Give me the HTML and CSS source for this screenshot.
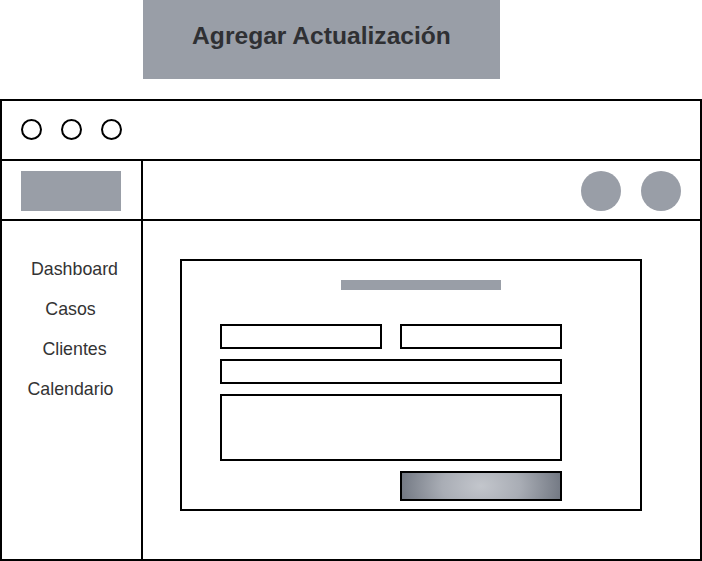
FILE: index.html
```html
<!doctype html>
<html lang="es">
<head>
<meta charset="utf-8">
<title>Agregar Actualización</title>
<meta name="viewport" content="width=device-width, initial-scale=1">
<link rel="stylesheet" href="styles.css">
</head>
<body>
<header class="banner">Agregar Actualización</header>
<div class="window">
<div class="titlebar">
<span class="dot"></span>
<span class="dot"></span>
<span class="dot"></span>
</div>
<div class="layout">
<div class="brand"><div class="logo"></div></div>
<div class="topbar">
<span class="avatar"></span>
<span class="avatar"></span>
</div>
<nav class="sidebar">
<a href="#">Dashboard</a>
<a href="#">Casos</a>
<a href="#">Clientes</a>
<a href="#">Calendario</a>
</nav>
<main class="content">
<form class="card">
<div class="card-title"></div>
<div class="row">
<input type="text" aria-label="Caso">
<input type="text" aria-label="Fecha">
</div>
<input type="text" aria-label="Título">
<textarea aria-label="Descripción"></textarea>
<div class="actions"><button type="button" aria-label="Guardar"></button></div>
</form>
</main>
</div>
</div>
</body>
</html>
```
FILE: styles.css
```css
* { box-sizing:border-box; margin:0; }
body { background:#fff; font-family:'Liberation Sans', Arial, sans-serif; color:#333; width:702px; height:561px; overflow:hidden; }
.banner { margin-left:143px; width:357px; height:79px; background:#999ea7; font-weight:bold; font-size:24.6px; color:#2f3033; display:flex; align-items:center; justify-content:center; padding-bottom:8px; }
.window { margin-top:20px; width:702px; height:462px; border:2px solid #000; display:flex; flex-direction:column; }
.titlebar { height:60px; border-bottom:2px solid #000; display:flex; align-items:center; gap:19px; padding:0 0 1px 19px; }
.dot { width:21px; height:21px; border:2px solid #000; border-radius:50%; }
.layout { flex-grow:1; display:grid; grid-template-columns:141px 1fr; grid-template-rows:60px 1fr; }
.brand { border-right:2px solid #000; border-bottom:2px solid #000; padding:10px 0 0 19px; }
.logo { width:100px; height:40px; background:#999ea7; }
.topbar { border-bottom:2px solid #000; display:flex; justify-content:flex-end; gap:20px; padding:10px 19px 0 0; }
.avatar { width:40px; height:40px; border-radius:50%; background:#999ea7; }
.sidebar { border-right:2px solid #000; display:flex; flex-direction:column; align-items:center; padding-top:28px; }
.sidebar a { color:#333; text-decoration:none; font-size:17.8px; line-height:40px; }
.sidebar a:nth-child(odd) { margin-left:6px; }
.sidebar a:nth-child(even) { margin-right:2px; }
.content { padding:38px 0 0 37px; }
.card { width:462px; height:252px; border:2px solid #000; padding:19px 0 0 38px; display:flex; flex-direction:column; gap:10px; }
.card-title { width:160px; height:10px; background:#999ea7; margin:0 0 24px 121px; }
.row { display:flex; gap:18px; }
input, textarea, button { border:2px solid #000; border-radius:0; font:inherit; }
input { width:342px; height:25px; }
.row input { width:162px; }
textarea { width:342px; height:67px; resize:none; }
.actions { display:flex; justify-content:flex-end; width:342px; }
button { width:162px; height:30px; background:radial-gradient(ellipse 55% 220% at center, #c3c6cc 0%, #a9adb5 45%, #6b717c 100%); }
```
